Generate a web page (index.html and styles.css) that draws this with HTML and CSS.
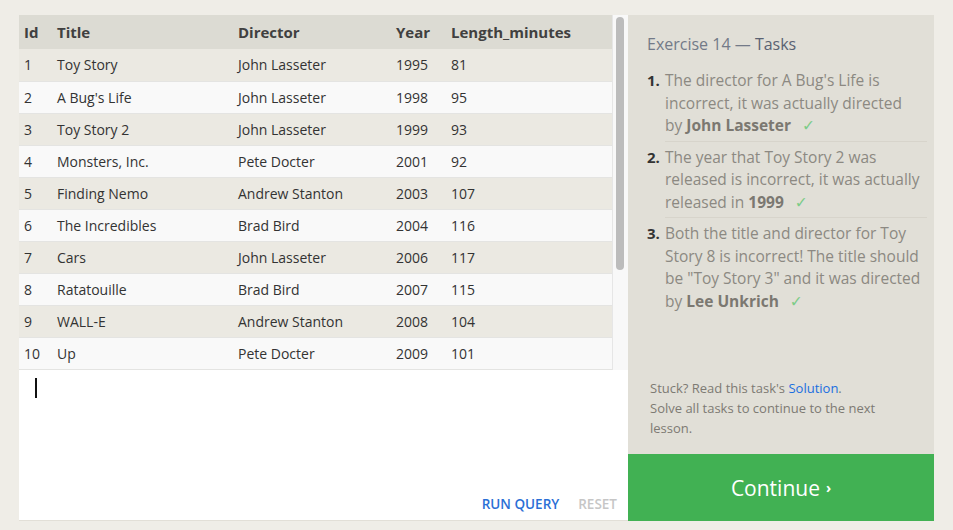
FILE: index.html
```html
<!DOCTYPE html>
<html>
<head>
<meta charset="utf-8">
<link rel="stylesheet" href="styles.css">
</head>
<body>
<div class="page">
  <div class="left">
    <div class="results">
      <div class="table-wrap">
        <table class="grid">
          <colgroup>
            <col class="c-id"><col class="c-title"><col class="c-dir"><col class="c-year"><col>
          </colgroup>
          <thead>
            <tr><th>Id</th><th>Title</th><th>Director</th><th>Year</th><th>Length_minutes</th></tr>
          </thead>
          <tbody>
            <tr><td>1</td><td>Toy Story</td><td>John Lasseter</td><td>1995</td><td>81</td></tr>
            <tr><td>2</td><td>A Bug's Life</td><td>John Lasseter</td><td>1998</td><td>95</td></tr>
            <tr><td>3</td><td>Toy Story 2</td><td>John Lasseter</td><td>1999</td><td>93</td></tr>
            <tr><td>4</td><td>Monsters, Inc.</td><td>Pete Docter</td><td>2001</td><td>92</td></tr>
            <tr><td>5</td><td>Finding Nemo</td><td>Andrew Stanton</td><td>2003</td><td>107</td></tr>
            <tr><td>6</td><td>The Incredibles</td><td>Brad Bird</td><td>2004</td><td>116</td></tr>
            <tr><td>7</td><td>Cars</td><td>John Lasseter</td><td>2006</td><td>117</td></tr>
            <tr><td>8</td><td>Ratatouille</td><td>Brad Bird</td><td>2007</td><td>115</td></tr>
            <tr><td>9</td><td>WALL-E</td><td>Andrew Stanton</td><td>2008</td><td>104</td></tr>
            <tr><td>10</td><td>Up</td><td>Pete Docter</td><td>2009</td><td>101</td></tr>
          </tbody>
        </table>
      </div>
      <div class="scrollbar"><div class="thumb"></div></div>
    </div>
    <div class="editor">
      <div class="cursor"></div>
      <div class="actions">
        <span class="run">RUN QUERY</span>
        <span class="reset">RESET</span>
      </div>
    </div>
  </div>
  <div class="right">
    <div class="tasks">
      <h2 class="tasks-title"><span class="ex">Exercise 14 — </span><span class="tt">Tasks</span></h2>
      <ol class="task-list">
        <li><span class="num">1.</span><p>The director for A Bug's Life is incorrect, it was actually directed by <b>John Lasseter</b> <span class="check">✓</span></p></li>
        <li><span class="num">2.</span><p>The year that Toy Story 2 was released is incorrect, it was actually released in <b>1999</b> <span class="check">✓</span></p></li>
        <li><span class="num">3.</span><p>Both the title and director for Toy Story 8 is incorrect! The title should be "Toy Story 3" and it was directed by <b>Lee Unkrich</b> <span class="check">✓</span></p></li>
      </ol>
    </div>
    <div class="help">
      <p>Stuck? Read this task's <a class="sol">Solution</a>.</p>
      <p>Solve all tasks to continue to the next lesson.</p>
    </div>
    <div class="continue">Continue <span class="chev">›</span></div>
  </div>
</div>
</body>
</html>
```

FILE: styles.css
```css
* { box-sizing: border-box; }
html, body { margin: 0; padding: 0; }
body {
  background: #efede7;
  font-family: "Open Sans", "DejaVu Sans", sans-serif;
  color: #333;
  width: 953px;
  height: 530px;
  overflow: hidden;
}
.page {
  display: flex;
  padding: 15px 0 0 19px;
  height: 521px;
}
.left {
  width: 609px;
  display: flex;
  flex-direction: column;
  background: #fff;
  border-bottom: 1px solid #e2dfd7;
}
.results {
  display: flex;
  height: 355px;
}
.table-wrap {
  width: 594px;
  background: #f9f9f9;
  border-right: 1px solid #e6e6e6;
}
.grid {
  width: 100%;
  border-collapse: collapse;
  font-size: 14px;
}
.c-id { width: 33px; }
.c-title { width: 181px; }
.c-dir { width: 158px; }
.c-year { width: 55px; }
.grid th {
  text-align: left;
  font-weight: 700;
  font-size: 15px;
  color: #404040;
  background: #dcdbd3;
  height: 34px;
  padding: 0 0 0 5px;
}
.grid td {
  height: 32px;
  padding: 0 0 0 5px;
  color: #333;
  border-bottom: 1px solid #e4e4e2;
}
.grid tbody tr:nth-child(odd) td { background: #ebe9e2; }
.grid tbody tr:nth-child(even) td { background: #f9f9f9; }
.scrollbar {
  width: 15px;
  background: #f8f8f8;
  padding: 2px 3px 0 3px;
}
.thumb {
  width: 8px;
  height: 253px;
  background: #bcbcbc;
  border-radius: 4px;
}
.editor {
  flex: 1;
  display: flex;
  flex-direction: column;
  justify-content: space-between;
  padding: 8px 11px 7px 16px;
}
.cursor {
  width: 2px;
  height: 20px;
  background: #111;
}
.actions {
  display: flex;
  justify-content: flex-end;
  gap: 19px;
  font-size: 13.5px;
  font-weight: 600;
}
.run { color: #2a6fd6; }
.reset { color: #c6c6c6; }
.right {
  width: 306px;
  background: #e1dfd7;
  display: flex;
  flex-direction: column;
}
.tasks {
  padding: 18px 7px 0 19px;
  flex: 1;
}
.tasks-title {
  margin: 0 0 14px 0;
  font-size: 16px;
  font-weight: 400;
  line-height: 22px;
}
.ex { color: #737a88; }
.tt { color: #5a6272; }
.task-list {
  list-style: none;
  margin: 0;
  padding: 0;
}
.task-list li {
  display: flex;
}
.num {
  width: 18px;
  font-weight: 700;
  font-size: 15px;
  line-height: 22.5px;
  color: #333;
}
.task-list p {
  margin: 0 0 4px 0;
  width: 262px;
  padding: 0 5px 4px 0;
  font-size: 15.5px;
  line-height: 22.5px;
  color: #8c8982;
  border-bottom: 1px solid #d7d4cb;
}
.task-list li:last-child p { border-bottom: none; }
.task-list b { color: #7b7871; font-weight: 700; }
.check { color: #7ccc88; margin-left: 7px; }
.help {
  padding: 0 19px 16px 22px;
  font-size: 13px;
  line-height: 20px;
  color: #7d7a73;
}
.help p { margin: 0; }
.sol { color: #1a6ee0; }
.continue {
  height: 67px;
  background: #41b153;
  color: #fff;
  font-size: 21px;
  display: flex;
  align-items: center;
  justify-content: center;
  gap: 6px;
}
.chev { font-size: 14px; font-weight: 700; }
```
